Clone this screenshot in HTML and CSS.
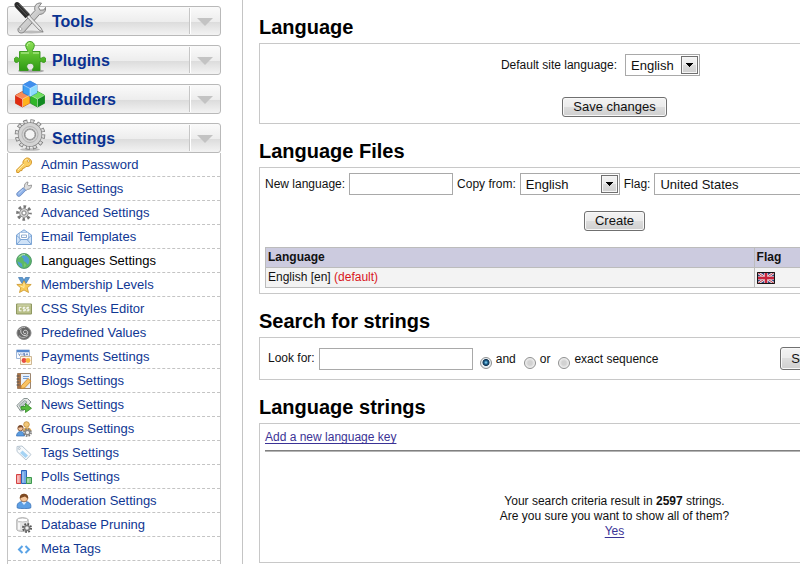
FILE: index.html
```html
<!DOCTYPE html>
<html lang="en">
<head>
<meta charset="utf-8">
<title>Languages Settings</title>
<link rel="stylesheet" href="styles.css">
</head>
<body>
<aside class="sidebar">
  <button type="button" class="section">
    <svg class="section-icon" viewBox="0 0 32 32" aria-hidden="true">
      <defs>
        <linearGradient id="steel" x1="0" y1="0" x2="1" y2="1"><stop offset="0" stop-color="#f6f6f6"/><stop offset="1" stop-color="#a6a6a6"/></linearGradient>
      </defs>
      <ellipse cx="17" cy="30" rx="13" ry="1.500" fill="#bbb"/>
      <path d="M22 2.500c2-1.500 4-1.800 5.500-1.300l-3 4 1.500 3 4-.3 1.500-2.500c.7 4-2 7-6 7l-15 17c-2 2.500-6 2-6.500-1-.3-1.500.5-2.500 1.500-3.300L21 8.500c-.6-2-.4-4.300 1-6z" fill="url(#steel)" stroke="#777" stroke-width=".9"/>
      <path d="M14 12l13 14 2 4-4-2L12 14z" fill="#e8e8e8" stroke="#777" stroke-width=".8"/>
      <path d="M1 1c1.500-1.500 3-1 4.500.3l10.500 11-4.500 4L1.500 5.500C.3 4 0 2.300 1 1z" fill="#2b2b2b"/>
      <path d="M3 3l10 10.500M5 2l9.500 10" stroke="#666" stroke-width=".8"/>
      <circle cx="6.500" cy="27" r="1.400" fill="#fff" stroke="#888" stroke-width=".6"/>
    </svg>
    <span class="section-title">Tools</span><span class="section-arrow"></span>
  </button>
  <button type="button" class="section">
    <svg class="section-icon" viewBox="0 0 32 32" aria-hidden="true">
      <defs>
        <linearGradient id="leaf" x1="0" y1="0" x2="0" y2="1"><stop offset="0" stop-color="#8fe05a"/><stop offset=".5" stop-color="#58bd2c"/><stop offset="1" stop-color="#2f9a14"/></linearGradient>
      </defs>
      <ellipse cx="17" cy="30" rx="13" ry="1.600" fill="#aaa"/>
      <path d="M5.500 10.500h8c.8-1.500-1.800-3-1.800-6 0-2.500 2-4 4.300-4s4.300 1.500 4.300 4c0 3-2.600 4.500-1.800 6h7.500v6.700c1.500.6 2-1 3.600-1 1.600 0 2.400 1.200 2.400 2.600s-.8 2.700-2.400 2.700c-1.600 0-2.100-1.600-3.600-1v9h-7.500c-.8-1.500 1.400-2 1.400-4.200 0-1.900-1.600-3-3.600-3s-3.600 1.100-3.600 3c0 2.200 2.200 2.700 1.400 4.200H5.500v-9c-1.200-.6-1.500 1-3 1C1 21.500.3 20.300.3 18.800s.7-2.600 2.200-2.600 1.800 1.600 3 1z" fill="url(#leaf)" stroke="#329517" stroke-width=".9"/>
      <path d="M7 12h8M13.200 5c0-2 1-3 2.800-3M19 12h6" stroke="#c3f3a2" stroke-width="1" fill="none"/>
    </svg>
    <span class="section-title">Plugins</span><span class="section-arrow"></span>
  </button>
  <button type="button" class="section">
    <svg class="section-icon" viewBox="0 0 32 32" aria-hidden="true">
      <ellipse cx="16" cy="27" rx="13" ry="1.500" fill="#ddd"/>
      <path d="M8.500 11.500l7 3.800v8l-7 3.700-7-3.700v-8z" fill="#ef4a18" stroke="#b93a10" stroke-width=".7"/>
      <path d="M8.500 11.500l7 3.800-7 3.700-7-3.700z" fill="#f98b55"/>
      <path d="M8.500 19l7-3.700v8l-7 3.700z" fill="#ffb31c"/>
      <path d="M1.500 15.300l7 3.700v8l-7-3.700z" fill="#df2a10"/>
      <path d="M23.500 11.500l7 3.800v8l-7 3.700-7-3.700v-8z" fill="#30b728" stroke="#15801a" stroke-width=".7"/>
      <path d="M23.500 11.500l7 3.800-7 3.700-7-3.700z" fill="#6fe05d"/>
      <path d="M23.500 19l7-3.700v8l-7 3.700z" fill="#118a22"/>
      <path d="M16 1l7 3.800v8l-7 3.700-7-3.700v-8z" fill="#3d9ff2" stroke="#2373c9" stroke-width=".7"/>
      <path d="M16 1l7 3.800-7 3.700-7-3.700z" fill="#3f8eed"/>
      <path d="M16 8.500l7-3.700v8l-7 3.700z" fill="#8cdcff"/>
      <path d="M8.500 19v8M1.500 15.300l7 3.700 7-3.700M23.500 19v8M16.500 15.300l7 3.700 7-3.700M16 8.500v8M9 4.800l7 3.700 7-3.700" fill="none" stroke="#fff" stroke-opacity=".65" stroke-width=".7"/>
    </svg>
    <span class="section-title">Builders</span><span class="section-arrow"></span>
  </button>
  <button type="button" class="section" aria-expanded="true">
    <svg class="section-icon" viewBox="0 0 32 32" aria-hidden="true">
      <ellipse cx="16" cy="30.500" rx="10" ry="1.300" fill="#bbb"/>
      <circle cx="16" cy="15.500" r="13" fill="none" stroke="#777" stroke-width="4.500" stroke-dasharray="3.900 2.906"/>
      <circle cx="16" cy="15.500" r="13" fill="none" stroke="#dcdcdc" stroke-width="3" stroke-dasharray="2.500 4.306" stroke-dashoffset="-.7"/>
      <circle cx="16" cy="15.500" r="8.700" fill="none" stroke="#808080" stroke-width="7"/>
      <circle cx="16" cy="15.500" r="8.700" fill="none" stroke="#d3d3d3" stroke-width="5.600"/>
      <circle cx="16" cy="15.500" r="8" fill="none" stroke="#b5b5b5" stroke-width="1"/>
      <circle cx="16" cy="15.500" r="5" fill="#f4f4f4" stroke="#888" stroke-width=".8"/>
    </svg>
    <span class="section-title">Settings</span><span class="section-arrow"></span>
  </button>
  <nav class="menu" aria-label="Settings">
    <a class="item" href="#"><svg class="icon" viewBox="0 0 16 16" aria-hidden="true"><path d="M9.500 1.500c2-1.600 6 .5 6 3.500 0 3-2.500 5-5.500 4.400L8.500 11l-2 .5-.5 2-2 .3-1 1.700H.8L.5 13l6.500-6.500c-.5-2 .8-4 2.500-5z" fill="#fbce62" stroke="#cf9020" stroke-width=".9"/><path d="M2 13l6-6M9 3.500c1-1 2.500-1 3.500-.5" stroke="#fff0b0" fill="none"/><circle cx="12.500" cy="4" r="1.100" fill="#fff" stroke="#b77c12" stroke-width=".6"/></svg>Admin Password</a>
    <a class="item" href="#"><svg class="icon" viewBox="0 0 16 16" aria-hidden="true"><path d="M8.500 6c-.5-2.500 1-5 3.500-5l-.6 2.600 1.400 1.200L15.500 4c.3 2.700-1.700 4.800-4.300 4.300L9.500 10 7 7.500z" fill="#ddd" stroke="#888" stroke-width=".8"/><path d="M7.300 6.800l2.500 2.500-5.300 5.400c-1 .9-2.400.9-3.200 0-.8-.8-.8-2.200 0-3z" fill="#8cb1e8" stroke="#6282ba" stroke-width=".8"/><path d="M2.500 12.800l4.800-4.600" stroke="#cadcf8"/></svg>Basic Settings</a>
    <a class="item" href="#"><svg class="icon" viewBox="0 0 16 16" aria-hidden="true"><circle cx="8" cy="8" r="6.300" fill="none" stroke="#777" stroke-width="3" stroke-dasharray="2.600 2.348" stroke-dashoffset="1.300"/><circle cx="8" cy="8" r="4.200" fill="#b9b9b9" stroke="#777" stroke-width="1"/><circle cx="8" cy="8" r="3.400" fill="none" stroke="#ddd"/><circle cx="8" cy="8" r="2" fill="#fff" stroke="#777" stroke-width=".8"/></svg>Advanced Settings</a>
    <a class="item" href="#"><svg class="icon" viewBox="0 0 16 16" aria-hidden="true"><path d="M.5 6L8 .8 15.500 6v9.500H.5z" fill="#cfe2f7" stroke="#7ea6d6"/><path d="M3.500 3.500h9v7h-9z" fill="#fff" stroke="#9ab9dd" stroke-width=".8"/><path d="M5.500 6h5v2.500h-5z" fill="none" stroke="#7799c4" stroke-width=".8"/><path d="M.8 6.500L5 10.500h6l4.200-4M1 15l4-4.500M15 15l-4-4.500" fill="none" stroke="#7ea6d6"/></svg>Email Templates</a>
    <a class="item current" href="#" aria-current="page"><svg class="icon" viewBox="0 0 16 16" aria-hidden="true"><circle cx="8" cy="8" r="7.500" fill="#5db866" stroke="#438c63" stroke-width=".8"/><path d="M6 2.500c2.500-.8 6 .5 7 3.500.5 2 .3 4-1 5.500-1.500-.2-1.300-2-2.700-2.500-2-.6-2.300-2-1.300-3.200C7 5 5 4.300 6 2.500zM1.500 8c1.500 1.500 3.500 1.500 4.500 3l.5 3.500C4 14 1.800 11.500 1.500 8z" fill="#4f9ed4"/><path d="M3 4.500c1.500-2.300 4-3.200 6-2.800" stroke="#c3efbb" fill="none"/><path d="M8 10l2 2-1.500 2.500z" fill="#7dce6c"/></svg>Languages Settings</a>
    <a class="item" href="#"><svg class="icon" viewBox="0 0 16 16" aria-hidden="true"><path d="M2.500.5h4L9 5 6 6.500zM13.500.5h-4L7 5l3 1.500z" fill="#5d9bd2" stroke="#4177ad" stroke-width=".7"/><path d="M8 3.800l1.700 3.400 5.500.3-3.900 3.300 1.200 4.700L8 13l-4.500 2.500 1.200-4.700L.8 7.500l5.500-.3z" fill="#f8ca57" stroke="#c9942b" stroke-width=".8"/><path d="M8 5.500v5L4.500 9" fill="none" stroke="#ffedaa"/></svg>Membership Levels</a>
    <a class="item" href="#"><svg class="icon" viewBox="0 0 16 16" aria-hidden="true"><path d="M.5 3h15v10H.5z" fill="#b8bf87" stroke="#8f9862"/><path d="M1.500 4h13" stroke="#d5dab2"/><path d="M5.500 6.300H3.300v3.500h2.200M9.300 6.300H7.200v1.700h2v1.800H7M13 6.300h-2.100v1.700h2v1.800h-2.200" fill="none" stroke="#fff"/></svg>CSS Styles Editor</a>
    <a class="item" href="#"><svg class="icon" viewBox="0 0 16 16" aria-hidden="true"><ellipse cx="8" cy="8" rx="7" ry="6.500" fill="#666" stroke="#888"/><path d="M3 10.500c2 3 7 3 9-.5" stroke="#aaa" stroke-width="1.200" fill="none"/><path d="M5 4.500c-1 3 1 6 4 6 2.500 0 3.500-3 2-4.500S7 5.500 7.500 7.500s2.500 1 2.500.3" fill="none" stroke="#ddd"/><path d="M3 5c1-2 4-3 6-2.500" stroke="#bbb" fill="none"/></svg>Predefined Values</a>
    <a class="item" href="#"><svg class="icon" viewBox="0 0 16 16" aria-hidden="true"><path d="M.5 1h13v8.500H.5z" fill="#f8fbff" stroke="#9eb6d8"/><path d="M1 1h12v2.300H1z" fill="#5588ce"/><path d="M2.500 4.500l1 2 1-2M6 4.500v2M9 4.500H7.500v1H9v1H7.500M10 6.500l1-2 1 2" stroke="#486caa" stroke-width=".7" fill="none"/><path d="M4.500 7.500h11v8h-11z" fill="#fff5e2" stroke="#ccb795"/><circle cx="8" cy="11.500" r="2.400" fill="#e64b43"/><circle cx="12" cy="11.500" r="2.400" fill="#f7b83d"/></svg>Payments Settings</a>
    <a class="item" href="#"><svg class="icon" viewBox="0 0 16 16" aria-hidden="true"><path d="M1.500.5h13v15h-13z" fill="#eaf1fa" stroke="#9c8670"/><path d="M1.500.5H5v15H1.500z" fill="#aa7448"/><path d="M.5 3h3M.5 6h3M.5 9h3M.5 12h3" stroke="#555"/><path d="M7 3.500h6M7 5.500h5" stroke="#739dd4"/><path d="M5.500 12.500L12 5.500l3 2.700-6.500 6.800-3.500.5z" fill="#fac463" stroke="#c88324" stroke-width=".8"/></svg>Blogs Settings</a>
    <a class="item" href="#"><svg class="icon" viewBox="0 0 16 16" aria-hidden="true"><path d="M.8 8.500L8 1.500h3.500L15 5l-7.500 8.500-3 .5z" fill="#e6e9e8" stroke="#879291"/><path d="M3 8.500l5.500-5 2.500 1.500-6 6zM6 9.500l5-4" fill="#c1cccd" stroke="#899596" stroke-width=".8"/><path d="M5 9.500h4.500v-3l6 4.800-6 4.200v-3H5z" fill="#55ba3c" stroke="#318a26" stroke-width=".8"/></svg>News Settings</a>
    <a class="item" href="#"><svg class="icon" viewBox="0 0 16 16" aria-hidden="true"><circle cx="10.500" cy="3.500" r="2.800" fill="#f2c779" stroke="#bd8937" stroke-width=".8"/><path d="M7 10c0-5 8-5 8.500 0z" fill="#e5ae55"/><circle cx="4.500" cy="7.200" r="2.700" fill="#f3c39a" stroke="#76482b" stroke-width=".8"/><path d="M2 6.800c0-3.500 5-3.500 5.200 0C5.500 5.500 4 6.500 2 6.800z" fill="#76482b"/><path d="M.5 15c0-6 8-6 8 0z" fill="#5a9ce0" stroke="#366db5" stroke-width=".7"/><circle cx="11.500" cy="11.500" r="3.600" fill="none" stroke="#777" stroke-width="1.600" stroke-dasharray="1.600 1.227"/><circle cx="11.500" cy="11.500" r="2.300" fill="#eee" stroke="#888" stroke-width="1.400"/></svg>Groups Settings</a>
    <a class="item" href="#"><svg class="icon" viewBox="0 0 16 16" aria-hidden="true"><path d="M1 1.500l5-.5 9 8.500-5 5.500L1 6.500z" fill="#f7fafc" stroke="#b8c6d2"/><path d="M6.500 5.500l5.500 5-2.500 2.500-5.500-5z" fill="#a5d3f4"/><circle cx="3.300" cy="3.500" r="1" fill="#fff" stroke="#9aabb9" stroke-width=".7"/></svg>Tags Settings</a>
    <a class="item" href="#"><svg class="icon" viewBox="0 0 16 16" aria-hidden="true"><path d="M.5 5.500h4.500v9H.5z" fill="#f3a0a0" stroke="#d44343"/><path d="M5.500 1.500h5v13h-5z" fill="#70a7e8" stroke="#2d62b7"/><path d="M10.500 8.500h5v6h-5z" fill="#8fd090" stroke="#3d9750"/><path d="M2 7v6.500M7 3v10.500M12 10v3.500" stroke="#fff" stroke-opacity=".5"/></svg>Polls Settings</a>
    <a class="item" href="#"><svg class="icon" viewBox="0 0 16 16" aria-hidden="true"><path d="M1.300 15c-1-5 2-6.500 6.700-6.500s7.700 1.500 6.700 6.500c-3 .8-10 .8-13.400 0z" fill="#5d9fe4" stroke="#3670b8" stroke-width=".8"/><path d="M5.500 9L8 12l2.500-3z" fill="#d9ebff"/><circle cx="8" cy="5" r="3.800" fill="#f5c79c" stroke="#98633c" stroke-width=".7"/><path d="M3.800 5.500C3-.8 13-.8 12.200 5.500 10.500 5.500 10 3.800 9 3.500c-2 1-4 1-5.200 2z" fill="#7e4a23"/></svg>Moderation Settings</a>
    <a class="item" href="#"><svg class="icon" viewBox="0 0 16 16" aria-hidden="true"><path d="M.8 3c0-3 11.400-3 11.400 0v9.500c0 2.500-11.400 2.500-11.400 0z" fill="#e3e3e3" stroke="#999" stroke-width=".8"/><ellipse cx="6.500" cy="3" rx="5.500" ry="1.900" fill="#fff" stroke="#aaa" stroke-width=".7"/><path d="M3 6v6.500" stroke="#fff" stroke-width="1.500"/><circle cx="11" cy="11" r="4" fill="none" stroke="#555" stroke-width="2" stroke-dasharray="1.700 1.441"/><circle cx="11" cy="11" r="2.500" fill="#eee" stroke="#777" stroke-width="1.500"/></svg>Database Pruning</a>
    <a class="item" href="#"><svg class="icon" viewBox="0 0 16 16" aria-hidden="true"><path d="M6.500 5L3 8.500 6.500 12M9.500 5L13 8.500 9.500 12" fill="none" stroke="#5aa3e6" stroke-width="2"/></svg>Meta Tags</a>
  </nav>
</aside>

<main class="content">
  <h1>Language</h1>
  <form class="panel panel-default">
    <div class="pair">
      <label for="site-language">Default site language:</label>
      <span class="select"><select id="site-language"><option>English</option></select></span>
    </div>
    <button type="button" class="btn">Save changes</button>
  </form>

  <h2>Language Files</h2>
  <form class="panel panel-files">
    <div class="fields">
      <label for="new-language">New language:</label>
      <input class="text" type="text" id="new-language">
      <label for="copy-from">Copy from:</label>
      <span class="select select-copy"><select id="copy-from"><option>English</option></select></span>
      <label for="flag">Flag:</label>
      <span class="select select-flag"><select id="flag"><option>United States</option></select></span>
    </div>
    <button type="button" class="btn">Create</button>
    <table class="files">
      <thead><tr><th class="col-name">Language</th><th>Flag</th></tr></thead>
      <tbody><tr>
        <td>English [en] <span class="default">(default)</span></td>
        <td><svg class="flag" viewBox="0 0 18 12" role="img" aria-label="United Kingdom"><path d="M0 0h18v12H0z" fill="#34427f"/><path d="M0 0l18 12M18 0L0 12" stroke="#eee" stroke-width="2.600"/><path d="M0 0l18 12M18 0L0 12" stroke="#c53145"/><path d="M9 0v12M0 6h18" stroke="#f0dfe2" stroke-width="3.600"/><path d="M9 0v12M0 6h18" stroke="#c8233b" stroke-width="2.400"/><path d="M.5.500h17v11H.5z" fill="none" stroke="#151515"/></svg></td>
      </tr></tbody>
    </table>
  </form>

  <h2>Search for strings</h2>
  <form class="panel panel-search">
    <label for="look-for">Look for:</label>
    <input class="text text-wide" type="text" id="look-for">
    <div class="modes">
      <label class="mode"><input type="radio" name="mode" checked><span>and</span></label>
      <label class="mode"><input type="radio" name="mode"><span>or</span></label>
      <label class="mode"><input type="radio" name="mode"><span>exact sequence</span></label>
    </div>
    <div class="submit"><button type="button" class="btn btn-tall">Search</button></div>
  </form>

  <h2>Language strings</h2>
  <section class="panel panel-strings">
    <a class="link" href="#">Add a new language key</a>
    <hr>
    <p>Your search criteria result in <b>2597</b> strings.<br>Are you sure you want to show all of them?<br><a class="link" href="#">Yes</a></p>
  </section>
</main>
</body>
</html>
```
FILE: styles.css
```css
*, *::before, *::after { box-sizing: border-box; }

body {
  margin: 0;
  display: flex;
  min-height: 100vh;
  overflow-x: hidden;
  background: #fff;
  color: #111;
  font: 12px/15px "Liberation Sans", Arial, sans-serif;
}

button, input, select { font-family: inherit; font-size: 13px; color: #111; }

/* Sidebar */
.sidebar {
  flex: 0 0 243px;
  display: flex;
  flex-direction: column;
  padding: 6px 21px 0 7px;
  border-right: 1px solid #c4c4c4;
}

.section {
  display: flex;
  align-items: center;
  flex: none;
  height: 30px;
  margin: 0 0 9px;
  padding: 0 0 0 6px;
  border: 1px solid #b9b9b9;
  border-radius: 3px;
  background: linear-gradient(#fafafa, #ededed 53%, #dcdcdc 54%, #f3f3f3);
  text-align: left;
}

.section[aria-expanded="true"] { margin-bottom: 0; }

.section-icon { width: 32px; height: 32px; margin-top: -6px; flex: none; }

.section-title {
  flex: 1;
  padding: 2px 0 0 6px;
  font-size: 16px;
  font-weight: bold;
  line-height: 20px;
  color: #0a3291;
}

.section-arrow {
  display: flex;
  align-items: center;
  justify-content: center;
  width: 31px;
  height: 26px;
  padding-top: 2px;
  border-left: 1px solid #c6c6c6;
  box-shadow: inset 1px 0 #fff;
}

.section-arrow::before {
  content: "";
  border: 8px solid transparent;
  border-top-color: #c3c3c3;
  border-bottom: 0;
}

.menu {
  flex: 1;
  border: solid #c4c4c4;
  border-width: 0 1px;
}

.item {
  display: flex;
  align-items: center;
  gap: 9px;
  height: 24px;
  padding-left: 8px;
  border-bottom: 1px dashed #c4c4c4;
  font-size: 13px;
  color: #0f3793;
  text-decoration: none;
}

.item.current { color: #000; }

.icon { width: 16px; height: 16px; flex: none; }

/* Content */
.content {
  flex: 1;
  min-width: 727px;
  padding-left: 16px;
}

h1, h2 {
  margin: 0;
  padding: 15px 0 4px;
  font-size: 20px;
  line-height: 24px;
  color: #000;
}

.panel { border: 1px solid #c8c8c8; padding: 5px; }

.panel-default, .panel-files { display: flex; flex-direction: column; align-items: center; }

.panel-default { gap: 21px; padding: 10px 5px 6px; }

.panel-files { gap: 16px; }

.pair {
  display: grid;
  grid-template-columns: 1fr 1fr;
  gap: 8px;
  align-items: center;
  align-self: stretch;
  padding-left: 13px;
}

.pair label { justify-self: end; }

.pair .select { justify-self: start; }

.fields { display: flex; align-items: center; align-self: stretch; gap: 4px; }

.text {
  width: 104px;
  height: 22px;
  padding: 0 4px;
  border: 1px solid #a9a9a9;
  background: #fff;
}

.text-wide { width: 154px; }

.select { position: relative; display: flex; width: 75px; height: 22px; }

.select-copy { width: 100px; }

.select-flag { flex: 1; }

.select select {
  width: 100%;
  padding: 0 20px 0 5px;
  border: 1px solid #a9a9a9;
  border-radius: 0;
  appearance: none;
  background: #fff;
}

.select::after {
  content: "";
  position: absolute;
  top: 2px;
  right: 2px;
  width: 17px;
  height: 18px;
  border: 1px solid #707070;
  background:
    conic-gradient(from -45deg at 50% 100%, #000 90deg, transparent 0) center / 8px 4px no-repeat,
    linear-gradient(#f4f4f4, #ebebeb 50%, #dcdcdc 50%, #cfcfcf);
  background:
    linear-gradient(#000, #000) center 6px / 7px 1px no-repeat,
    linear-gradient(#000, #000) center 7px / 5px 1px no-repeat,
    linear-gradient(#000, #000) center 8px / 3px 1px no-repeat,
    linear-gradient(#000, #000) center 9px / 1px 1px no-repeat,
    linear-gradient(#f4f4f4, #ebebeb 50%, #dcdcdc 50%, #cfcfcf);
  box-shadow: inset 0 0 0 1px #f6f6f6;
  pointer-events: none;
}

.btn {
  height: 20px;
  padding: 0 10px;
  border: 1px solid #707070;
  border-radius: 3px;
  background: linear-gradient(#f3f3f3, #ebebeb 50%, #dddddd 50%, #cfcfcf);
  box-shadow: inset 0 0 0 1px #f8f8f8;
  line-height: 16px;
}

.btn-tall { height: 23px; }

.files { width: 100%; border-collapse: collapse; color: #111; }

.files th, .files td {
  height: 20px;
  padding: 2px;
  border: 1px solid #bcbcbc;
  text-align: left;
  background: #f3f3f3;
}

.files th { background: #cccbdf; }

.col-name { width: 70%; }

.default { color: #d8161c; }

.flag { display: block; width: 18px; height: 12px; }

.panel-search { display: flex; align-items: center; gap: 4px; height: 43px; padding: 0 8px; }

.modes { display: flex; gap: 8px; padding: 4px 0 0 3px; }

.mode { display: flex; align-items: flex-end; gap: 4px; }

.mode span { padding-bottom: 2px; }

.mode input {
  appearance: none;
  width: 12px;
  height: 12px;
  margin: 0;
  border: 1px solid #8e8f8f;
  border-radius: 50%;
  background: radial-gradient(#d2d2d2 30%, #f2f2f2 70%);
}

.mode input:checked { background: radial-gradient(circle at 50% 45%, #7cc8e8 5%, #1b5f8c 25%, #12334f 42%, #e8eef2 52%); }

.submit { flex: 1; display: flex; justify-content: center; }

.link { color: #3b3396; text-decoration: underline; text-underline-offset: 2px; }

.panel-strings { padding: 6px 5px 23px; }

.panel-strings hr {
  height: 2px;
  margin: 5px 0 42px;
  border: 0;
  border-top: 1px solid #808080;
  background: #b4b4b4;
}

.panel-strings p { margin: 0; text-align: center; }
```
